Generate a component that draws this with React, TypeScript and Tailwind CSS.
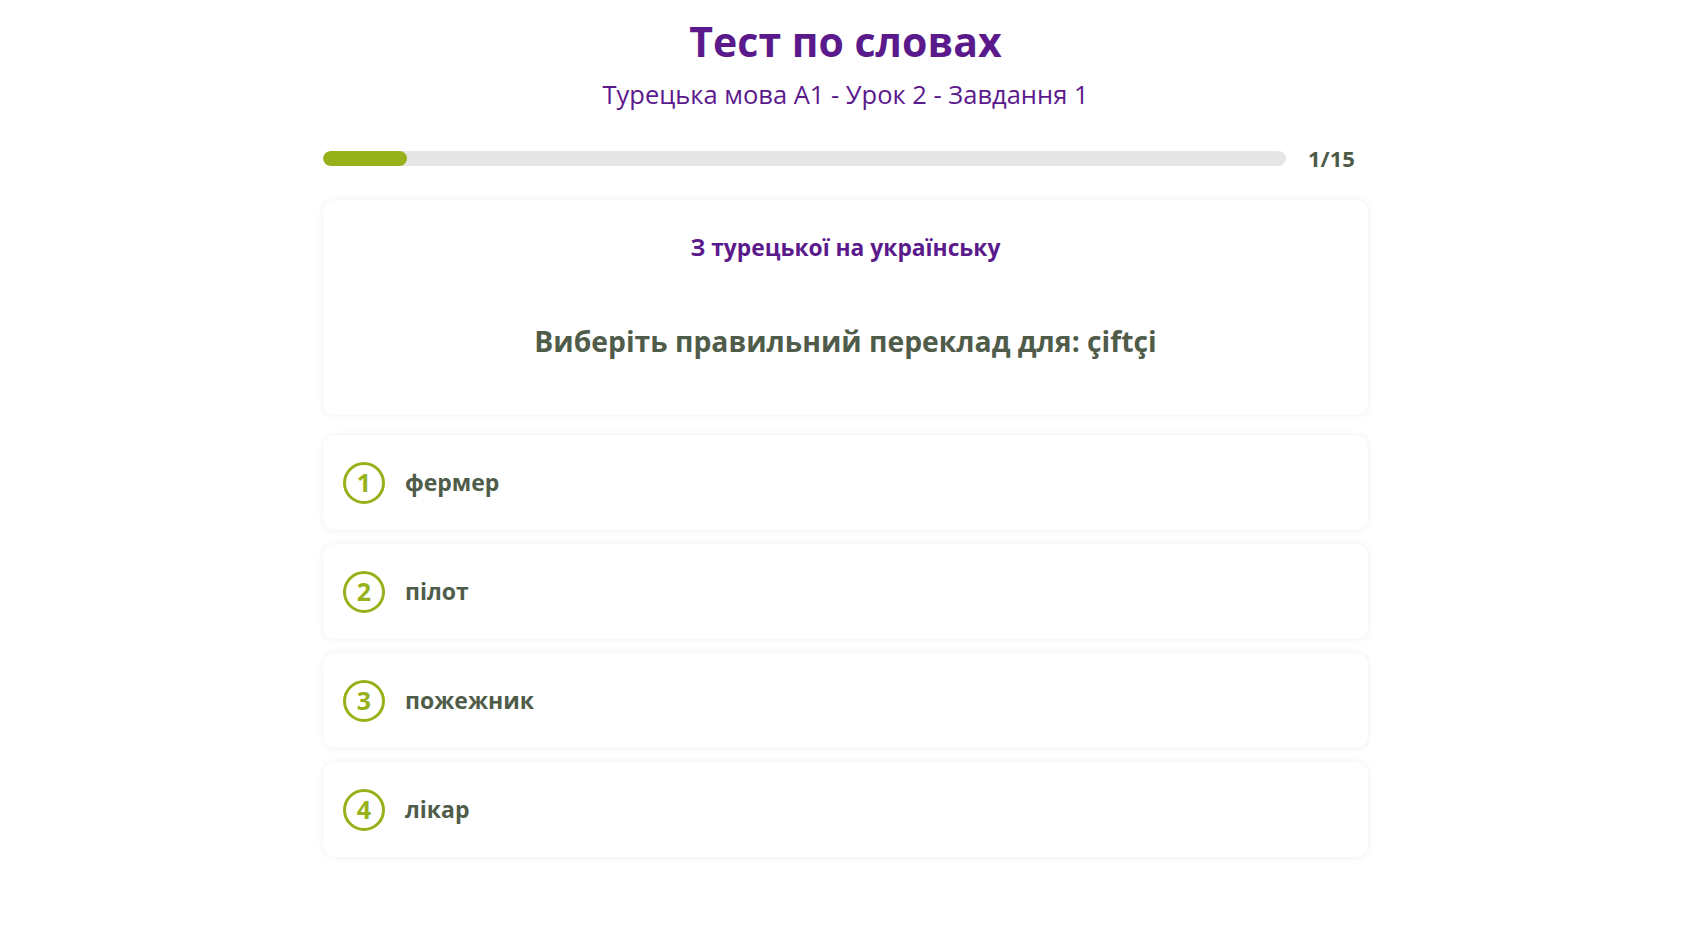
const options = ["фермер", "пілот", "пожежник", "лікар"];

function OptionRow({ n, label }: { n: number; label: string }) {
  return (
    <div className="flex h-[95px] items-center rounded-xl bg-white pl-[20px] shadow-[0_0_7px_rgba(0,0,0,0.07)]">
      <div className="flex h-[42px] w-[42px] items-center justify-center rounded-full border-[3px] border-[#97b11a] text-[25px] font-bold leading-none text-[#97b11a]">
        {n}
      </div>
      <span className="ml-[20px] text-[23px] font-bold text-[#505c4a]">{label}</span>
    </div>
  );
}

export default function App() {
  const progress = 1 / 15;
  return (
    <div className="flex min-h-screen flex-col items-center bg-white font-['Open_Sans','Noto_Sans',sans-serif]">
      <h1 className="mt-[17px] text-[41px] font-bold leading-[48px] text-[#5b1a8c]">Тест по словах</h1>
      <p className="mt-[14px] text-[25.5px] leading-[30px] text-[#5b1a8c]">Турецька мова А1 - Урок 2 - Завдання 1</p>

      <div className="w-[1045px]">
        <div className="mt-[38px] flex items-center">
          <div className="h-[15px] flex-1 overflow-hidden rounded-full bg-[#e6e6e6]">
            <div className="h-full rounded-full bg-[#97b11a]" style={{ width: `${Math.max(progress * 100, 8.7)}%` }} />
          </div>
          <div className="w-[82px] pl-[22px] text-[22px] font-bold leading-none text-[#4d5a47]">1/15</div>
        </div>

        <div className="mt-[31px] flex h-[215px] flex-col items-center rounded-xl bg-white pt-[34px] shadow-[0_0_7px_rgba(0,0,0,0.07)]">
          <div className="text-[22.8px] font-bold leading-[28px] text-[#5b1a8c]">З турецької на українську</div>
          <div className="mt-[61px] text-[28.3px] font-bold leading-[36px] text-[#505c4a]">
            Виберіть правильний переклад для: çiftçi
          </div>
        </div>

        <div className="mt-[20px] flex flex-col gap-[14px]">
          {options.map((o, i) => (
            <OptionRow key={o} n={i + 1} label={o} />
          ))}
        </div>
      </div>
    </div>
  );
}
